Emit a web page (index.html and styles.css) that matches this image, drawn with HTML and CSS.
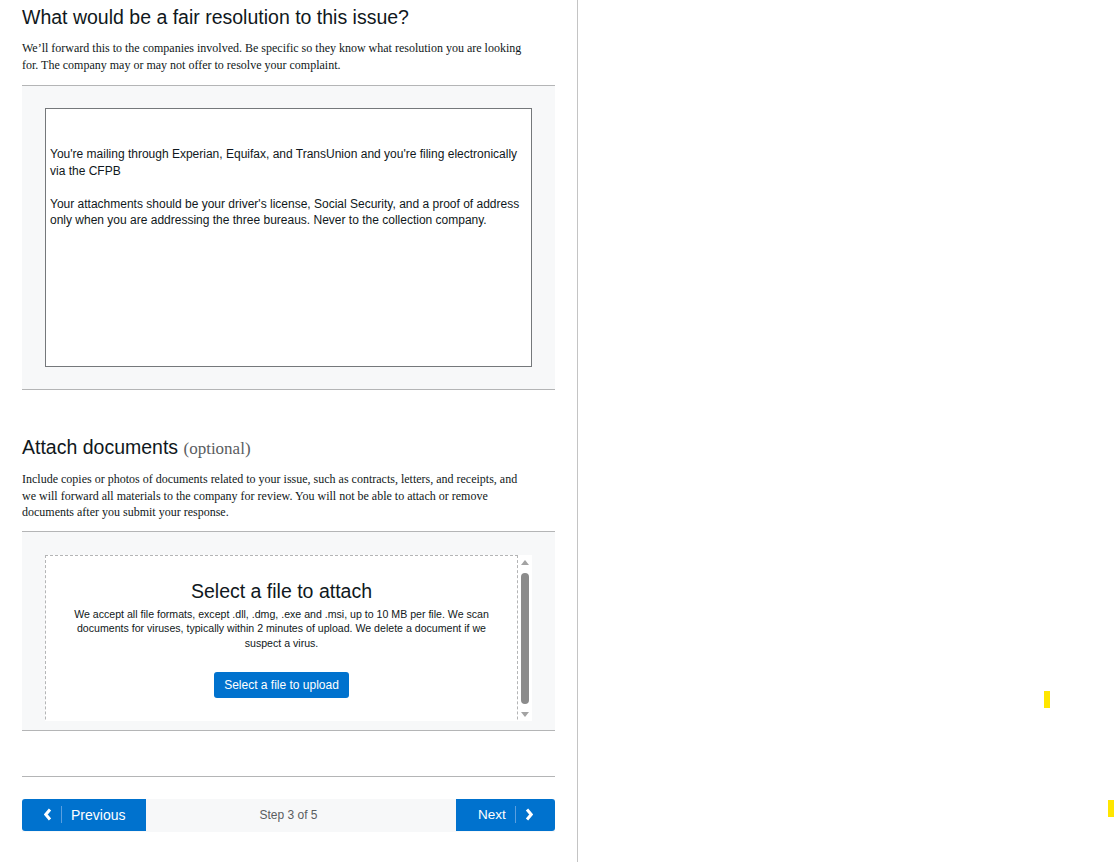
FILE: index.html
```html
<!DOCTYPE html>
<html lang="en">
<head>
  <meta charset="UTF-8">
  <meta name="viewport" content="width=device-width, initial-scale=1.0">
  <title>Your complaint - Step 3 of 5</title>
  <link rel="stylesheet" href="styles.css">
</head>
<body>
  <div class="page">
    <main class="column">
      <section class="question">
        <h2 class="questionTitle">What would be a fair resolution to this issue?</h2>
        <p class="questionHelp">We’ll forward this to the companies involved. Be specific so they know what resolution you are looking for. The company may or may not offer to resolve your complaint.</p>
        <div class="field">
          <textarea class="answer" aria-label="Fair resolution">


You're mailing through Experian, Equifax, and TransUnion and you're filing electronically via the CFPB

Your attachments should be your driver's license, Social Security, and a proof of address only when you are addressing the three bureaus. Never to the collection company.</textarea>
        </div>
      </section>

      <section class="question attach">
        <h2 class="questionTitle">Attach documents <span class="optional">(optional)</span></h2>
        <p class="questionHelp">Include copies or photos of documents related to your issue, such as contracts, letters, and receipts, and we will forward all materials to the company for review. You will not be able to attach or remove documents after you submit your response.</p>
        <div class="field uploadField">
          <div class="uploader">
            <div class="dropzone">
              <h3 class="dropzoneTitle">Select a file to attach</h3>
              <p class="dropzoneText">We accept all file formats, except .dll, .dmg, .exe and .msi, up to 10 MB per file. We scan documents for viruses, typically within 2 minutes of upload. We delete a document if we suspect a virus.</p>
              <button class="uploadButton" type="button">Select a file to upload</button>
            </div>
            <div class="scrollbar">
              <span class="scrollbar_arrow up"></span>
              <span class="scrollbar_thumb"></span>
              <span class="scrollbar_arrow down"></span>
            </div>
          </div>
        </div>
      </section>

      <nav class="stepNav">
        <a href="#" class="stepNav_btn prev">
          <svg width="8" height="13" viewBox="0 0 8 13"><polyline points="6,1.5 1.8,6.5 6,11.5" fill="none" stroke="#fff" stroke-width="3" /></svg>
          <span class="stepNav_sep"></span>
          <span>Previous</span>
        </a>
        <span class="stepNav_count">Step 3 of 5</span>
        <a href="#" class="stepNav_btn next">
          <span>Next</span>
          <span class="stepNav_sep"></span>
          <svg width="8" height="13" viewBox="0 0 8 13"><polyline points="2,1.5 6.2,6.5 2,11.5" fill="none" stroke="#fff" stroke-width="3" /></svg>
        </a>
      </nav>
    </main>

    <span class="marker markerA"></span>
    <span class="marker markerB"></span>
  </div>
</body>
</html>
```

FILE: styles.css
```css
* {
  margin: 0;
  padding: 0;
  box-sizing: border-box;
}
html, body {
  height: 100%;
}
body {
  font-family: "Liberation Sans", Arial, sans-serif;
  color: #101820;
  background-color: #fff;
}
.page {
  position: relative;
  height: 100%;
  overflow: hidden;
}
.column {
  width: 578px;
  height: 100%;
  padding: 0 22px;
  border-right: 1px solid #c4c4c4;
}
.questionTitle {
  padding-top: 5px;
  font-size: 19.5px;
  line-height: 25px;
  font-weight: normal;
}
.optional {
  font-family: "Liberation Serif", "Times New Roman", serif;
  font-size: 17px;
  color: #5a5d61;
}
.questionHelp {
  max-width: 508px;
  margin: 10px 0 11px;
  font-family: "Liberation Serif", "Times New Roman", serif;
  font-size: 12px;
  line-height: 17px;
}
.field {
  background-color: #f7f8f9;
  border-top: 1px solid #b4b5b6;
  border-bottom: 1px solid #b4b5b6;
  padding: 22px 23px;
}
.answer {
  display: block;
  width: 100%;
  height: 259px;
  padding: 4px 4px;
  border: 1px solid #75787b;
  font-family: "Liberation Sans", Arial, sans-serif;
  font-size: 12px;
  line-height: 16.5px;
  color: #101820;
  background-color: #fff;
  resize: none;
  overflow: hidden;
}
.attach {
  margin-top: 45px;
}
.attach .questionTitle {
  padding-top: 0;
}
.attach .questionHelp {
  margin: 10px 0 10px;
  line-height: 16.6px;
}

/* file upload */
.uploadField {
  padding: 23px 23px 9px;
}
.uploader {
  display: flex;
  height: 166px;
  background-color: #fff;
  overflow: hidden;
}
.dropzone {
  flex: 1;
  height: 220px;
  border: 1px dashed #b4b5b6;
  padding: 23px 20px 0;
  text-align: center;
}
.dropzoneTitle {
  font-size: 19.5px;
  line-height: 24px;
  font-weight: normal;
}
.dropzoneText {
  margin-top: 4px;
  font-size: 10.6px;
  line-height: 14.5px;
}
.uploadButton {
  margin-top: 22px;
  height: 26px;
  padding: 0 10px;
  border: 0;
  border-radius: 3px;
  background-color: #0072ce;
  color: #fff;
  font-family: "Liberation Sans", Arial, sans-serif;
  font-size: 12px;
  cursor: pointer;
}
.scrollbar {
  width: 14px;
  display: flex;
  flex-direction: column;
  align-items: center;
  padding: 5px 0 4px;
}
.scrollbar_arrow {
  width: 0;
  height: 0;
  border-left: 4px solid transparent;
  border-right: 4px solid transparent;
}
.scrollbar_arrow.up {
  border-bottom: 5px solid #a3a3a3;
}
.scrollbar_arrow.down {
  border-top: 5px solid #a3a3a3;
}
.scrollbar_thumb {
  flex: 1;
  width: 8px;
  margin: 8px 0;
  border-radius: 4px;
  background-color: #8b8b8b;
}

/* step navigation: the count spans the whole bar, buttons sit on top */
.stepNav {
  margin-top: 45px;
  padding-top: 22px;
  border-top: 1px solid #b4b5b6;
  display: grid;
  grid-template-columns: auto 1fr auto;
  align-items: start;
}
.stepNav_count {
  grid-row: 1;
  grid-column: 1 / -1;
  height: 33px;
  line-height: 33px;
  text-align: center;
  font-size: 12px;
  color: #5a5d61;
  background-color: #f7f8f9;
}
.stepNav_btn {
  grid-row: 1;
  z-index: 1;
  height: 32px;
  display: flex;
  align-items: center;
  gap: 9px;
  background-color: #0072ce;
  color: #fff;
  font-size: 14px;
  text-decoration: none;
}
.stepNav_btn.prev {
  grid-column: 1;
  width: 124px;
  padding-left: 22px;
  border-radius: 3px 0 0 3px;
}
.stepNav_btn.next {
  grid-column: 3;
  width: 99px;
  padding-left: 22px;
  border-radius: 0 3px 3px 0;
  font-size: 13.5px;
}
.stepNav_sep {
  width: 1px;
  height: 17px;
  background-color: #5a9fe0;
}

.marker {
  position: absolute;
  width: 6px;
  height: 17px;
  background-color: #ffe600;
}
.markerA {
  left: 1044px;
  top: 691px;
}
.markerB {
  left: 1108px;
  top: 800px;
}
```
